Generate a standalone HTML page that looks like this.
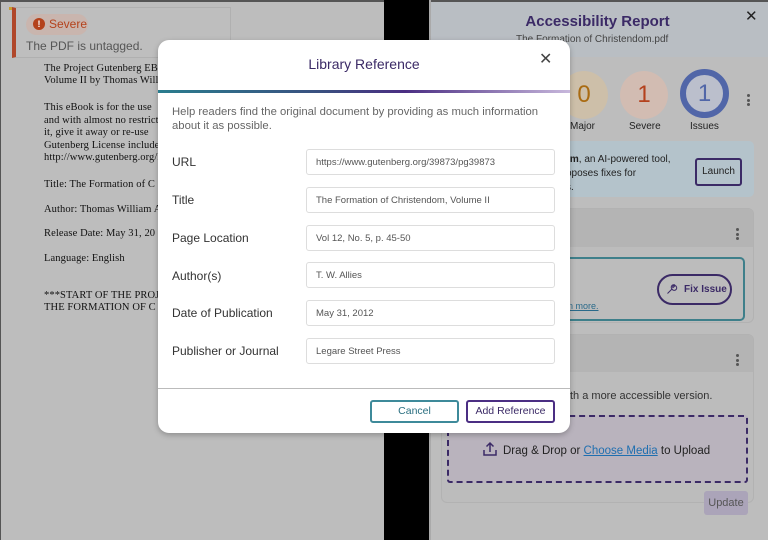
<!DOCTYPE html>
<html style="background:#bdbdbd"><head><meta charset="utf-8"><style>
*{box-sizing:border-box;margin:0;padding:0}
body{width:768px;height:540px;overflow:hidden;background:#bdbdbd;font-family:"Liberation Sans",sans-serif;position:relative;color:#333}
.abs{position:absolute}
.pdf{font-family:"Liberation Serif",serif;font-size:10.5px;color:#111;line-height:12px;left:44px;white-space:nowrap;letter-spacing:0.1px}
.modal{left:158px;top:40px;width:412px;height:393px;background:#fff;border-radius:11px;box-shadow:0 2px 6px rgba(0,0,0,.25)}
.lbl{left:14px;font-size:12px;color:#333}
.inp{left:148px;width:249px;height:26px;border:1px solid #ddd;border-radius:3px;font-size:9.5px;color:#555;padding:7px 9px 0}
.kebab{width:4px}
.kebab i{display:block;width:3px;height:3px;border-radius:50%;background:#555;margin:0 0 1.5px}
</style></head><body>
<div class="abs" style="left:0;top:0;width:768px;height:540px;background:#bdbdbd"></div>
<div class="abs" style="left:0;top:0;width:768px;height:2px;background:#555"></div>
<div class="abs" style="left:0;top:0;width:1px;height:540px;background:#555"></div>
<div class="abs" style="left:384px;top:0;width:46px;height:540px;background:#000"></div>
<div class="abs" style="left:429px;top:0;width:2px;height:540px;background:#aaa"></div>

<!-- severe card -->
<div class="abs" style="left:12px;top:7px;width:219px;height:51px;border:1px solid #b0b0b0;border-left:4px solid #b0472a;background:#bebebe"></div>
<div class="abs" style="left:9px;top:7px;width:3px;height:3px;background:#c9a030"></div>
<div class="abs" style="left:26px;top:14px;width:62px;height:21px;border-radius:11px;background:#c9b5ae"></div>
<div class="abs" style="left:33px;top:18px;width:12px;height:12px;border-radius:50%;background:#b4421c;color:#fff;font-size:9px;font-weight:bold;text-align:center;line-height:12px">!</div>
<div class="abs" style="left:49px;top:17px;font-size:12px;color:#b4421c">Severe</div>
<div class="abs" style="left:26px;top:39px;font-size:12px;color:#555">The PDF is untagged.</div>

<div class="abs pdf" style="top:63px">The Project Gutenberg EBook<br>Volume II by Thomas Willia</div>
<div class="abs pdf" style="top:102px;line-height:12.5px">This eBook is for the use<br>and with almost no restrict<br>it, give it away or re-use<br>Gutenberg License include<br>http://www.gutenberg.org/lic</div>
<div class="abs pdf" style="top:179px">Title: The Formation of C</div>
<div class="abs pdf" style="top:204px">Author: Thomas William A</div>
<div class="abs pdf" style="top:228px">Release Date: May 31, 20</div>
<div class="abs pdf" style="top:253px">Language: English</div>
<div class="abs pdf" style="top:290px">***START OF THE PROJ<br>THE FORMATION OF C</div>

<!-- right panel -->
<div class="abs" style="left:431px;top:2px;width:337px;height:55px;background:#b9bec3"></div>
<div class="abs" style="left:431px;top:13px;width:333px;text-align:center;font-size:15px;font-weight:bold;color:#3b2a66">Accessibility Report</div>
<div class="abs" style="left:516px;top:34px;font-size:10px;color:#444">The Formation of Christendom.pdf</div>
<div class="abs" style="left:745px;top:7px;font-size:15px;color:#222">✕</div>

<div class="abs" style="left:560px;top:71px;width:48px;height:48px;border-radius:50%;background:#cdbfa9;color:#a96b12;font-size:24px;text-align:center;line-height:48px">0</div>
<div class="abs" style="left:570px;top:121px;font-size:10px;color:#222">Major</div>
<div class="abs" style="left:620px;top:71px;width:48px;height:48px;border-radius:50%;background:#d2bcb2;color:#b4411d;font-size:24px;text-align:center;line-height:48px">1</div>
<div class="abs" style="left:629px;top:121px;font-size:10px;color:#222">Severe</div>
<div class="abs" style="left:680px;top:69px;width:49px;height:49px;border-radius:50%;border:6px solid #5166a8;background:#bbbfcc;color:#5166a8;font-size:24px;text-align:center;line-height:37px">1</div>
<div class="abs" style="left:690px;top:121px;font-size:10px;color:#222">Issues</div>
<div class="abs kebab" style="left:747px;top:94px"><i></i><i></i><i></i></div>

<div class="abs" style="left:440px;top:141px;width:314px;height:56px;background:#b4c3cb;border-radius:5px"></div>
<div class="abs" style="left:566px;top:153px;font-size:10px;color:#222;line-height:14px"><b>rm</b>, an AI-powered tool,<br>oposes fixes for<br>s.</div>
<div class="abs" style="left:695px;top:158px;width:47px;height:28px;border:2px solid #3b2a66;border-radius:3px;font-size:10px;color:#222;text-align:center;line-height:24px">Launch</div>

<div class="abs" style="left:441px;top:208px;width:313px;height:115px;border:1px solid #b2b2b2;border-radius:6px;background:#bcbcbc;overflow:hidden"><div style="height:38px;background:#b4b4b4"></div></div>
<div class="abs kebab" style="left:736px;top:228px"><i></i><i></i><i></i></div>
<div class="abs" style="left:430px;top:257px;width:315px;height:64px;border:2px solid #3e7f8a;border-left:none;border-radius:0 5px 5px 0"></div>
<div class="abs" style="left:565px;top:301px;font-size:9px;color:#2a6a8a;text-decoration:underline">rn more.</div>
<div class="abs" style="left:657px;top:274px;width:75px;height:31px;border:2px solid #3b2a66;border-radius:16px;font-size:10px;font-weight:bold;color:#3b2a66;line-height:27px;padding-left:25px">Fix Issue</div>
<svg class="abs" style="left:666px;top:283px" width="12" height="12" viewBox="0 0 12 12"><path d="M1.5 10.5L6 6M6 6a2.5 2.5 0 1 0 3-3.5L7.8 4 7 4.5 6.5 4 7 3 8.3 1.8A2.5 2.5 0 0 0 6 6z" fill="none" stroke="#3b2a66" stroke-width="1"/></svg>

<div class="abs" style="left:441px;top:334px;width:313px;height:169px;border:1px solid #b2b2b2;border-radius:6px;background:#bcbcbc;overflow:hidden"><div style="height:37px;background:#b4b4b4"></div></div>
<div class="abs kebab" style="left:736px;top:354px"><i></i><i></i><i></i></div>
<div class="abs" style="left:570px;top:390px;font-size:11px;color:#333">th a more accessible version.</div>
<div class="abs" style="left:447px;top:415px;width:301px;height:68px;border:2px dashed #3b2a66;border-radius:3px;background:#b9b3bd"></div>
<div class="abs" style="left:482px;top:441px;font-size:11.5px;color:#222"><svg width="16" height="16" viewBox="0 0 16 16" style="vertical-align:-3px;margin-right:5px"><path d="M2 9v5h12V9M8 11V2M4.5 5.5L8 2l3.5 3.5" fill="none" stroke="#3b2a66" stroke-width="1.5"/></svg>Drag &amp; Drop or <span style="color:#1f6fb0;text-decoration:underline">Choose Media</span> to Upload</div>
<div class="abs" style="left:704px;top:491px;width:44px;height:24px;border-radius:3px;background:#aba4b9;font-size:11px;color:#555;text-align:center;line-height:24px">Update</div>

<!-- modal -->
<div class="abs modal">
 <div class="abs" style="left:0;top:16px;width:412px;text-align:center;font-size:14px;color:#3b2a66">Library Reference</div>
 <div class="abs" style="left:381px;top:9px;font-size:16px;color:#444">✕</div>
 <div class="abs" style="left:0;top:50px;width:412px;height:3px;background:linear-gradient(90deg,#2a7d8e,#3a4f80 40%,#4b2e83 60%,#c8b8dc)"></div>
 <div class="abs" style="left:14px;top:66px;width:380px;font-size:11.3px;line-height:13.5px;color:#666">Help readers find the original document by providing as much information about it as possible.</div>
 <div class="abs lbl" style="top:115px">URL</div>
 <div class="abs inp" style="top:109px">https://www.gutenberg.org/39873/pg39873</div>
 <div class="abs lbl" style="top:153px">Title</div>
 <div class="abs inp" style="top:147px">The Formation of Christendom, Volume II</div>
 <div class="abs lbl" style="top:191px">Page Location</div>
 <div class="abs inp" style="top:185px">Vol 12, No. 5, p. 45-50</div>
 <div class="abs lbl" style="top:229px">Author(s)</div>
 <div class="abs inp" style="top:222px">T. W. Allies</div>
 <div class="abs lbl" style="top:266px">Date of Publication</div>
 <div class="abs inp" style="top:260px">May 31, 2012</div>
 <div class="abs lbl" style="top:304px">Publisher or Journal</div>
 <div class="abs inp" style="top:298px">Legare Street Press</div>
 <div class="abs" style="left:0;top:348px;width:412px;height:1px;background:#bbb"></div>
 <div class="abs" style="left:212px;top:360px;width:89px;height:23px;border:2px solid #3e8a9a;border-radius:3px;font-size:10.5px;color:#2a6f80;text-align:center;line-height:19px">Cancel</div>
 <div class="abs" style="left:308px;top:360px;width:89px;height:23px;border:2px solid #4b2e83;border-radius:3px;font-size:10.5px;color:#3b2a66;text-align:center;line-height:19px">Add Reference</div>
</div>
</body></html>
